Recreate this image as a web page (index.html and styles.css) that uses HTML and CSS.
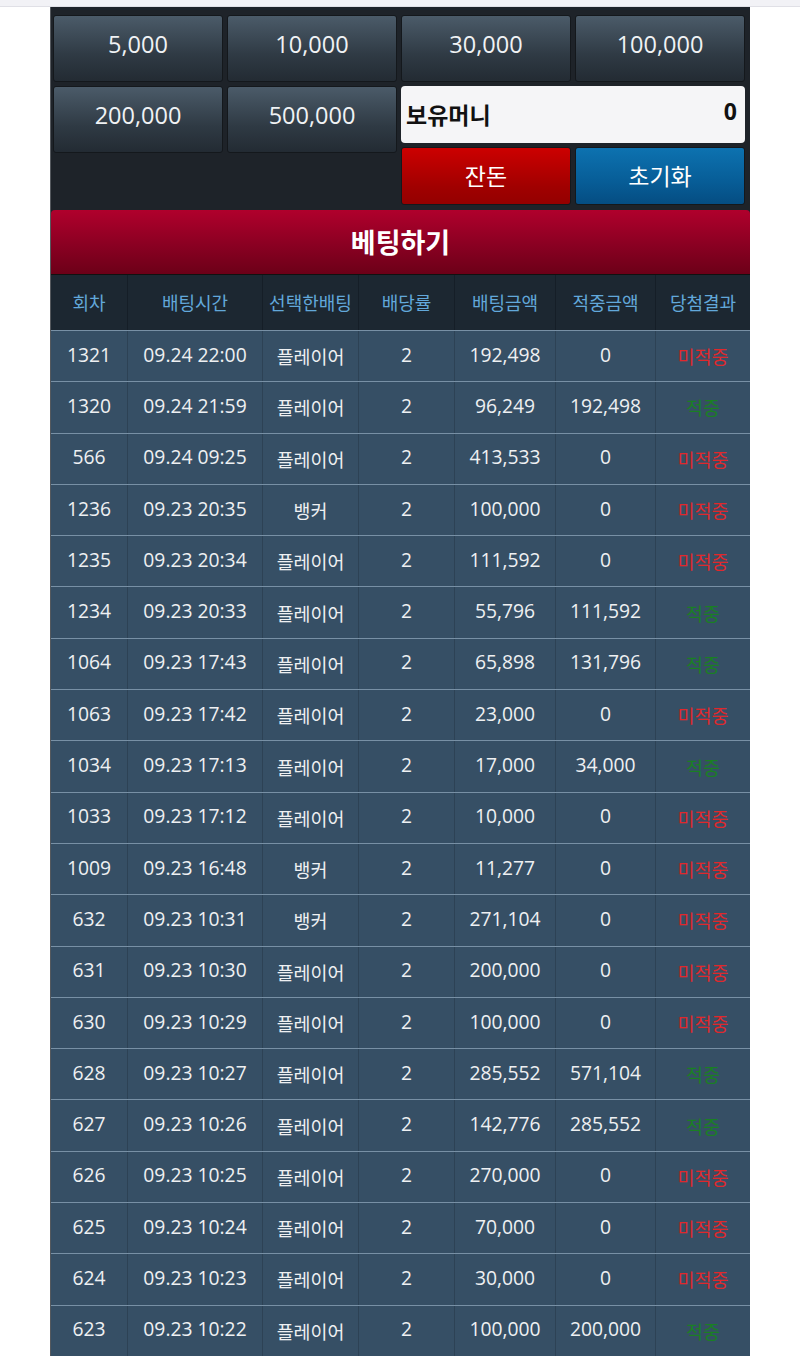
FILE: index.html
```html
<!DOCTYPE html>
<html lang="ko">
<head>
<meta charset="utf-8">
<title>베팅하기</title>
<link rel="stylesheet" href="styles.css">
</head>
<body>
<div class="topbar"></div>
<div class="wrap">
  <div class="panel">
    <button class="chip">5,000</button>
    <button class="chip">10,000</button>
    <button class="chip">30,000</button>
    <button class="chip">100,000</button>
    <button class="chip tall">200,000</button>
    <button class="chip tall">500,000</button>
    <div class="money"><span class="money-label">보유머니</span><span class="money-val">0</span></div>
    <button class="act red">잔돈</button>
    <button class="act blue">초기화</button>
  </div>
  <div class="title">베팅하기</div>
  <div class="table">
    <div class="row head">
      <div>회차</div><div>배팅시간</div><div>선택한배팅</div><div>배당률</div><div>배팅금액</div><div>적중금액</div><div>당첨결과</div>
    </div>
    <div class="row"><div>1321</div><div>09.24 22:00</div><div class="ko">플레이어</div><div>2</div><div>192,498</div><div>0</div><div class="ko lose">미적중</div></div>
    <div class="row"><div>1320</div><div>09.24 21:59</div><div class="ko">플레이어</div><div>2</div><div>96,249</div><div>192,498</div><div class="ko win">적중</div></div>
    <div class="row"><div>566</div><div>09.24 09:25</div><div class="ko">플레이어</div><div>2</div><div>413,533</div><div>0</div><div class="ko lose">미적중</div></div>
    <div class="row"><div>1236</div><div>09.23 20:35</div><div class="ko">뱅커</div><div>2</div><div>100,000</div><div>0</div><div class="ko lose">미적중</div></div>
    <div class="row"><div>1235</div><div>09.23 20:34</div><div class="ko">플레이어</div><div>2</div><div>111,592</div><div>0</div><div class="ko lose">미적중</div></div>
    <div class="row"><div>1234</div><div>09.23 20:33</div><div class="ko">플레이어</div><div>2</div><div>55,796</div><div>111,592</div><div class="ko win">적중</div></div>
    <div class="row"><div>1064</div><div>09.23 17:43</div><div class="ko">플레이어</div><div>2</div><div>65,898</div><div>131,796</div><div class="ko win">적중</div></div>
    <div class="row"><div>1063</div><div>09.23 17:42</div><div class="ko">플레이어</div><div>2</div><div>23,000</div><div>0</div><div class="ko lose">미적중</div></div>
    <div class="row"><div>1034</div><div>09.23 17:13</div><div class="ko">플레이어</div><div>2</div><div>17,000</div><div>34,000</div><div class="ko win">적중</div></div>
    <div class="row"><div>1033</div><div>09.23 17:12</div><div class="ko">플레이어</div><div>2</div><div>10,000</div><div>0</div><div class="ko lose">미적중</div></div>
    <div class="row"><div>1009</div><div>09.23 16:48</div><div class="ko">뱅커</div><div>2</div><div>11,277</div><div>0</div><div class="ko lose">미적중</div></div>
    <div class="row"><div>632</div><div>09.23 10:31</div><div class="ko">뱅커</div><div>2</div><div>271,104</div><div>0</div><div class="ko lose">미적중</div></div>
    <div class="row"><div>631</div><div>09.23 10:30</div><div class="ko">플레이어</div><div>2</div><div>200,000</div><div>0</div><div class="ko lose">미적중</div></div>
    <div class="row"><div>630</div><div>09.23 10:29</div><div class="ko">플레이어</div><div>2</div><div>100,000</div><div>0</div><div class="ko lose">미적중</div></div>
    <div class="row"><div>628</div><div>09.23 10:27</div><div class="ko">플레이어</div><div>2</div><div>285,552</div><div>571,104</div><div class="ko win">적중</div></div>
    <div class="row"><div>627</div><div>09.23 10:26</div><div class="ko">플레이어</div><div>2</div><div>142,776</div><div>285,552</div><div class="ko win">적중</div></div>
    <div class="row"><div>626</div><div>09.23 10:25</div><div class="ko">플레이어</div><div>2</div><div>270,000</div><div>0</div><div class="ko lose">미적중</div></div>
    <div class="row"><div>625</div><div>09.23 10:24</div><div class="ko">플레이어</div><div>2</div><div>70,000</div><div>0</div><div class="ko lose">미적중</div></div>
    <div class="row"><div>624</div><div>09.23 10:23</div><div class="ko">플레이어</div><div>2</div><div>30,000</div><div>0</div><div class="ko lose">미적중</div></div>
    <div class="row"><div>623</div><div>09.23 10:22</div><div class="ko">플레이어</div><div>2</div><div>100,000</div><div>200,000</div><div class="ko win">적중</div></div>
  </div>
</div>
</body>
</html>
```
FILE: styles.css
```css
* { box-sizing: border-box; }
html, body { margin: 0; padding: 0; background: #ffffff; }
body {
  font-family: "Open Sans", "Noto Sans CJK KR", sans-serif;
  color: #eef0f2;
  overflow: hidden;
  height: 1357px;
}
.topbar {
  height: 7px;
  background: #f2f2f6;
  border-bottom: 1px solid #e0e0e6;
}
.wrap {
  width: 700px;
  margin: 0 auto;
  background: #1e2329;
  border-left: 1px solid #55595e;
}
.panel {
  display: grid;
  grid-template-columns: repeat(4, 170px);
  grid-template-rows: 67px 57px 58px;
  gap: 4px;
  padding: 8px 5px 5px 2px;
}
.chip {
  font-family: inherit;
  font-size: 23.5px;
  color: #f0f2f4;
  background: linear-gradient(#4b5b69, #2f3a44 60%, #232b33);
  border: 1px solid #14181c;
  border-radius: 3px;
  padding: 0 0 10px 0;
  margin: 0;
}
.chip.tall {
  grid-row: 2 / span 2;
  height: 67px;
  align-self: start;
}
.money {
  grid-column: 3 / span 2;
  background: #f5f5f7;
  border-radius: 4px;
  display: flex;
  align-items: center;
  justify-content: space-between;
  padding: 0 8px 2px 5px;
  color: #111;
  font-weight: 700;
  font-size: 23px;
}
.money-val { font-size: 23px; padding-bottom: 6px; }
.act {
  font-family: inherit;
  font-size: 23px;
  color: #ffffff;
  border: 1px solid #14181c;
  border-radius: 3px;
  padding: 0 0 2px 0;
  margin: 0;
}
.act.red { background: linear-gradient(#cc0000, #a00000 70%, #940000); }
.act.blue { background: linear-gradient(#0d72b0, #075d97 60%, #054d82); }
.title {
  height: 65px;
  background: linear-gradient(#b0002c, #8a0022 55%, #6c0018);
  border-radius: 4px 4px 0 0;
  border-bottom: 1px solid #111;
  display: flex;
  align-items: center;
  justify-content: center;
  color: #fff;
  font-weight: 700;
  font-size: 27px;
  padding-bottom: 2px;
}
.table { display: flex; flex-direction: column; }
.row {
  display: grid;
  grid-template-columns: 76px 135px 96px 96px 101px 100px 1fr;
  height: 51.3px;
  background: #364f65;
  border-top: 1px solid #7890a5;
  font-size: 19.3px;
}
.row > div {
  display: flex;
  align-items: center;
  justify-content: center;
  border-left: 1px solid #2d4255;
  padding-bottom: 4px;
  white-space: nowrap;
}
.row > div:first-child { border-left: none; }
.row.head {
  height: 55px;
  background: #1c2731;
  border-top: none;
  color: #62a8da;
  font-size: 18px;
}
.row.head > div { border-left-color: #151e27; padding-bottom: 2px; }
.row .ko { font-size: 18.4px; padding-bottom: 0; }
.row .lose { color: #e0282c; font-size: 18.5px; }
.row .win { color: #1a7f24; font-size: 18.5px; }
```
